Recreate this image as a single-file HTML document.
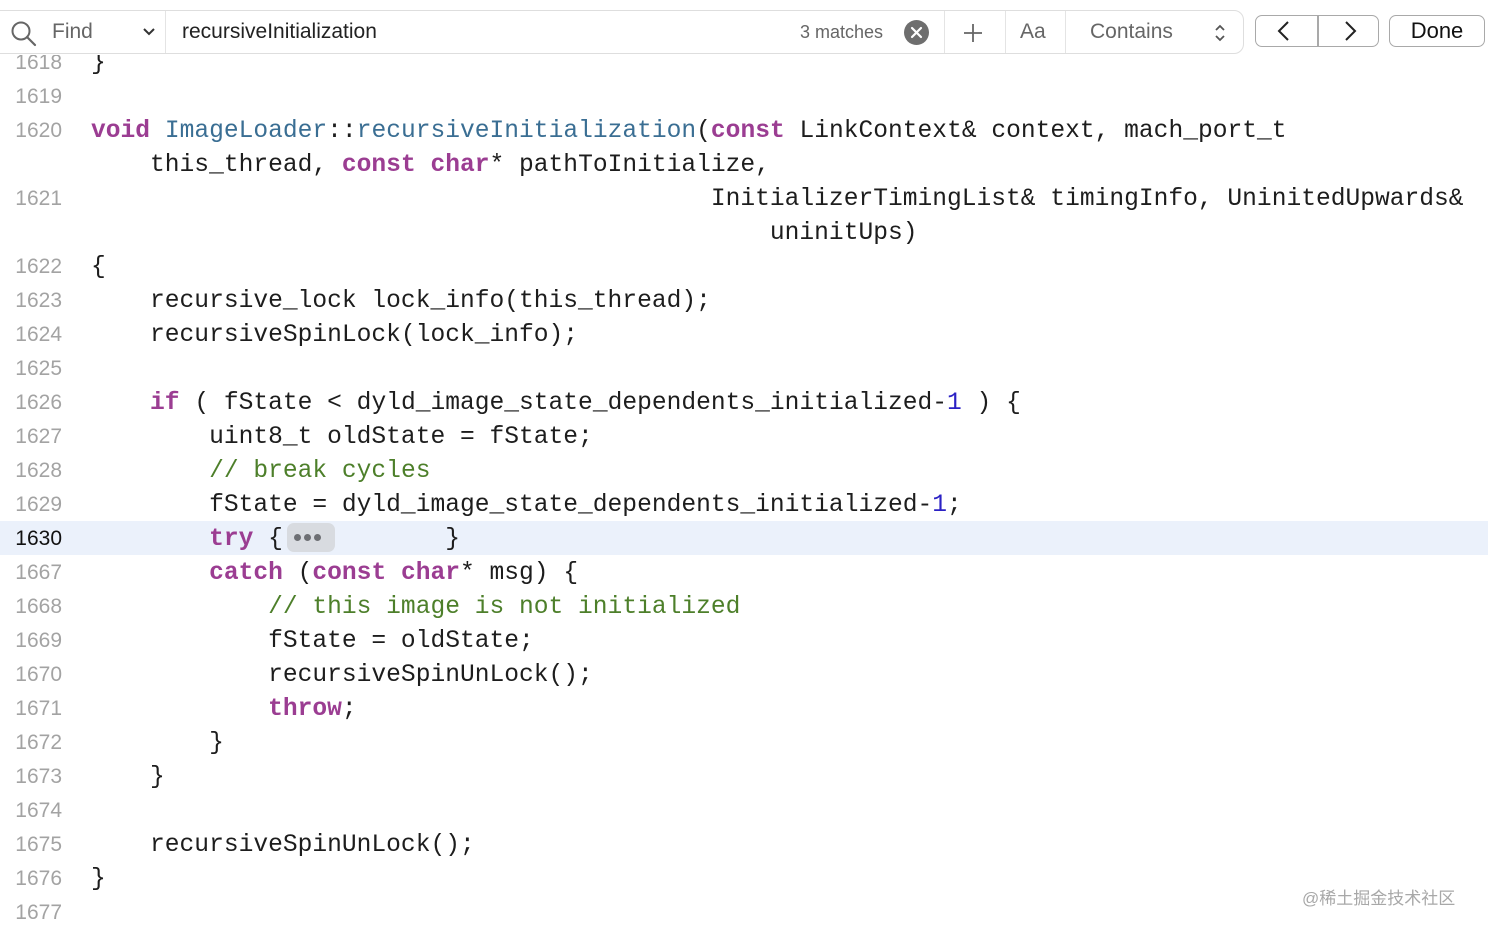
<!DOCTYPE html>
<html><head><meta charset="utf-8"><style>
body{margin:0;width:1488px;height:932px;background:#fff;overflow:hidden;position:relative;font-family:"Liberation Sans",sans-serif}
.ln{position:absolute;left:0;width:62px;text-align:right;font-size:21px;color:#a3a3a3;height:34px;line-height:34px;margin-top:1px}
.cd{position:absolute;left:91px;font-family:"Liberation Mono",monospace;font-size:24.6px;color:#1d1d1d;white-space:pre;height:34px;line-height:34px;margin-top:2px}
.k{color:#9b3d92;font-weight:bold}
.f{color:#3a6e93}
.c{color:#4d7f2a}
.n{color:#2b21c4}
.hl{position:absolute;left:0;top:521px;width:1488px;height:34px;background:#ebf1fb}
.bar{position:absolute;left:-10px;top:10px;width:1252px;height:42px;border:1px solid #dedede;border-radius:10px;background:#fff}
.t{position:absolute;font-size:21px;line-height:42px;top:11px;color:#555}
.sep{position:absolute;top:11px;width:1px;height:42px;background:#e4e4e4}
.btn{position:absolute;top:15px;height:32px;border:1.5px solid #a9a9a9;border-radius:7px;background:#fff;box-sizing:border-box}
</style></head><body>
<div style="position:absolute;left:0;top:3px;width:1488px;height:2px;background:#e3e3e3"></div>
<div class="hl"></div>

<div class="ln" style="top:45px">1618</div><div class="cd" style="top:45px">}</div>
<div style="position:absolute;left:0;top:0;width:1488px;height:55px;background:#fff"></div>
<div class="bar"></div>
<svg style="position:absolute;left:10px;top:20px" width="28" height="28" viewBox="0 0 28 28"><circle cx="11" cy="11" r="8.5" fill="none" stroke="#666" stroke-width="2"/><line x1="17" y1="17" x2="25" y2="25" stroke="#666" stroke-width="2.2" stroke-linecap="round"/></svg>
<div class="t" style="left:52px;color:#666">Find</div>
<svg style="position:absolute;left:141px;top:26px" width="16" height="12" viewBox="0 0 16 12"><path d="M3 3l5 5 5-5" fill="none" stroke="#333" stroke-width="2"/></svg>
<div class="sep" style="left:165px"></div>
<div class="t" style="left:182px;color:#222">recursiveInitialization</div>
<div class="t" style="left:800px;font-size:18px;color:#666">3 matches</div>
<div style="position:absolute;left:904px;top:20px;width:25px;height:25px;border-radius:50%;background:#6e6e6e"></div>
<svg style="position:absolute;left:904px;top:20px" width="25" height="25"><path d="M8 8l9 9M17 8l-9 9" stroke="#fff" stroke-width="2.2" stroke-linecap="round"/></svg>
<div class="sep" style="left:944px"></div>
<svg style="position:absolute;left:962px;top:22px" width="22" height="22"><path d="M11 2v18M2 11h18" stroke="#666" stroke-width="1.8"/></svg>
<div class="sep" style="left:1005px"></div>
<div class="t" style="left:1020px;color:#666">Aa</div>
<div class="sep" style="left:1065px"></div>
<div class="t" style="left:1090px;color:#666">Contains</div>
<svg style="position:absolute;left:1213px;top:23px" width="14" height="20"><path d="M3 7l4-4 4 4M3 13l4 4 4-4" fill="none" stroke="#555" stroke-width="1.8"/></svg>
<div class="btn" style="left:1255px;width:124px"></div>
<div style="position:absolute;left:1317px;top:16px;width:1.5px;height:30px;background:#a9a9a9"></div>
<svg style="position:absolute;left:1274px;top:20px" width="20" height="22"><path d="M14 2L5 11l9 9" fill="none" stroke="#222" stroke-width="2"/></svg>
<svg style="position:absolute;left:1340px;top:20px" width="20" height="22"><path d="M6 2l9 9-9 9" fill="none" stroke="#222" stroke-width="2"/></svg>
<div class="btn" style="left:1389px;width:96px"></div>
<div style="position:absolute;left:1389px;top:15px;width:96px;line-height:32px;text-align:center;font-size:22px;color:#111">Done</div>

<div class="ln" style="top:79px">1619</div>
<div class="ln" style="top:113px">1620</div><div class="cd" style="top:113px"><span class="k">void</span> <span class="f">ImageLoader</span>::<span class="f">recursiveInitialization</span>(<span class="k">const</span> LinkContext&amp; context, mach_port_t</div>
<div class="cd" style="top:147px">    this_thread, <span class="k">const</span> <span class="k">char</span>* pathToInitialize,</div>
<div class="ln" style="top:181px">1621</div><div class="cd" style="top:181px">                                          InitializerTimingList&amp; timingInfo, UninitedUpwards&amp;</div>
<div class="cd" style="top:215px">                                              uninitUps)</div>
<div class="ln" style="top:249px">1622</div><div class="cd" style="top:249px">{</div>
<div class="ln" style="top:283px">1623</div><div class="cd" style="top:283px">    recursive_lock lock_info(this_thread);</div>
<div class="ln" style="top:317px">1624</div><div class="cd" style="top:317px">    recursiveSpinLock(lock_info);</div>
<div class="ln" style="top:351px">1625</div>
<div class="ln" style="top:385px">1626</div><div class="cd" style="top:385px">    <span class="k">if</span> ( fState &lt; dyld_image_state_dependents_initialized-<span class="n">1</span> ) {</div>
<div class="ln" style="top:419px">1627</div><div class="cd" style="top:419px">        uint8_t oldState = fState;</div>
<div class="ln" style="top:453px">1628</div><div class="cd" style="top:453px">        <span class="c">// break cycles</span></div>
<div class="ln" style="top:487px">1629</div><div class="cd" style="top:487px">        fState = dyld_image_state_dependents_initialized-<span class="n">1</span>;</div>
<div class="ln" style="top:521px;color:#111">1630</div><div class="cd" style="top:521px">        <span class="k">try</span> {           }</div>
<div style="position:absolute;left:287px;top:523px;width:48px;height:29px;border-radius:7px;background:#d8dbe0"></div>
<div style="position:absolute;left:294px;top:534px;font-size:0">
<span style="display:inline-block;width:7px;height:7px;border-radius:50%;background:#6d6f73;margin-right:3px"></span><span style="display:inline-block;width:7px;height:7px;border-radius:50%;background:#6d6f73;margin-right:3px"></span><span style="display:inline-block;width:7px;height:7px;border-radius:50%;background:#6d6f73"></span></div>
<div class="ln" style="top:555px">1667</div><div class="cd" style="top:555px">        <span class="k">catch</span> (<span class="k">const</span> <span class="k">char</span>* msg) {</div>
<div class="ln" style="top:589px">1668</div><div class="cd" style="top:589px">            <span class="c">// this image is not initialized</span></div>
<div class="ln" style="top:623px">1669</div><div class="cd" style="top:623px">            fState = oldState;</div>
<div class="ln" style="top:657px">1670</div><div class="cd" style="top:657px">            recursiveSpinUnLock();</div>
<div class="ln" style="top:691px">1671</div><div class="cd" style="top:691px">            <span class="k">throw</span>;</div>
<div class="ln" style="top:725px">1672</div><div class="cd" style="top:725px">        }</div>
<div class="ln" style="top:759px">1673</div><div class="cd" style="top:759px">    }</div>
<div class="ln" style="top:793px">1674</div>
<div class="ln" style="top:827px">1675</div><div class="cd" style="top:827px">    recursiveSpinUnLock();</div>
<div class="ln" style="top:861px">1676</div><div class="cd" style="top:861px">}</div>
<div class="ln" style="top:895px">1677</div>
<div style="position:absolute;left:1302px;top:884px;font-size:17px;color:#a8a8a8;font-family:'Liberation Sans','Noto Sans CJK SC',sans-serif">@稀土掘金技术社区</div>
</body></html>
